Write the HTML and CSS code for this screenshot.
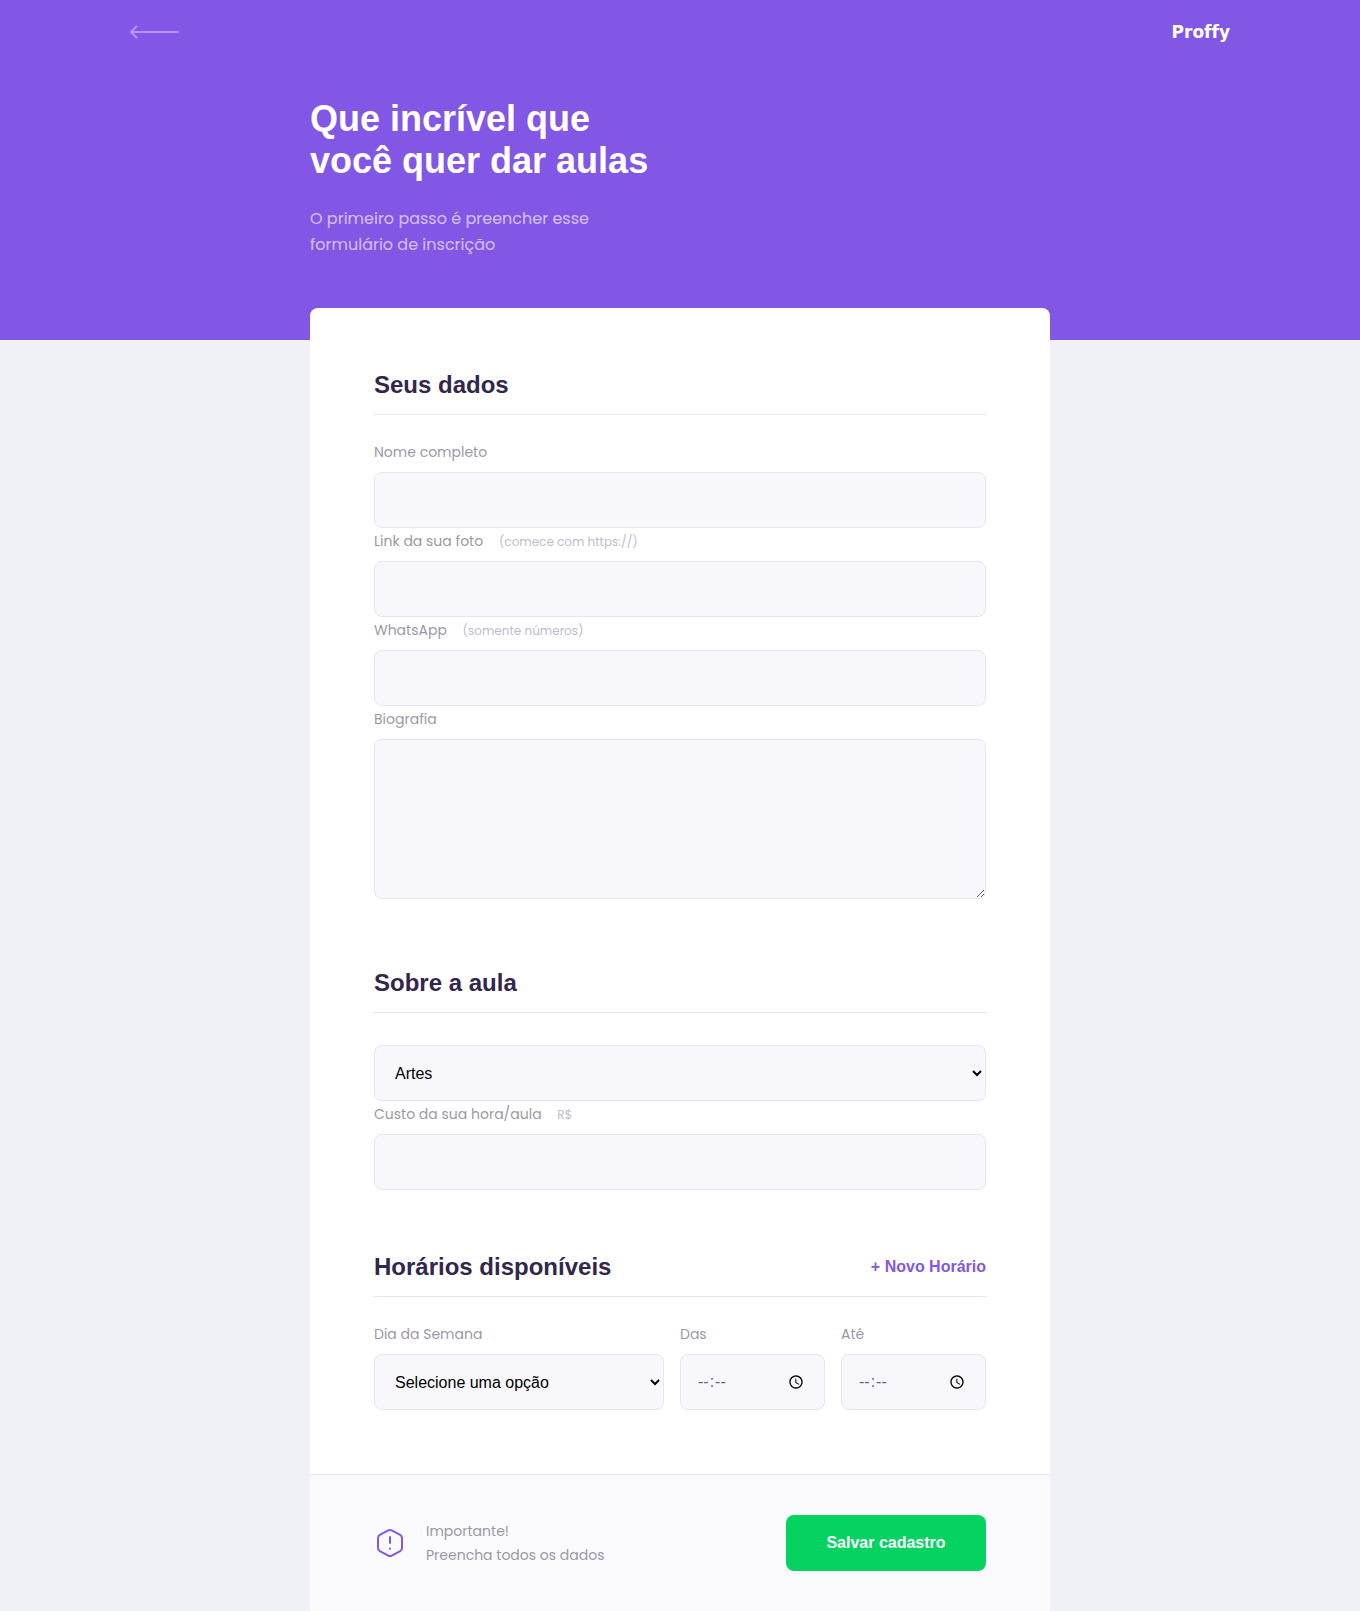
FILE: index.html
```
<!DOCTYPE html>
<html lang="pt-BR">
<head>
  <meta charset="utf-8">
  <meta name="viewport" content="width=device-width, initial-scale=1">
  <title>Proffy | Dar aulas</title>
  <link rel="stylesheet" href="styles.css">
</head>
<body>
  <header class="page-header">
    <nav class="top-bar">
      <a class="back-link" href="#" aria-label="Voltar">
        <svg class="back-icon" width="50" height="14" viewBox="0 0 50 14" fill="none" stroke="currentColor" stroke-width="2" stroke-linecap="round" stroke-linejoin="round">
          <path d="M48 7H1.500M6.500 1.500L1 7l5.500 5.500"/>
        </svg>
      </a>
      <a class="logo" href="#">Proffy</a>
    </nav>
    <div class="header-content">
      <h1 class="page-title">Que incrível que<br>você quer dar aulas</h1>
      <p class="page-intro">O primeiro passo é preencher esse<br>formulário de inscrição</p>
    </div>
  </header>

  <main class="card">
    <form class="class-form" id="create-class">
      <section class="group" aria-labelledby="your-data">
        <div class="group-heading">
          <h2 class="group-title" id="your-data">Seus dados</h2>
        </div>
        <div class="field">
          <label class="label" for="name">Nome completo</label>
          <input class="control" id="name" name="name" type="text">
        </div>
        <div class="field">
          <label class="label" for="avatar">Link da sua foto <small class="hint">(comece com https://)</small></label>
          <input class="control" id="avatar" name="avatar" type="url">
        </div>
        <div class="field">
          <label class="label" for="whatsapp">WhatsApp <small class="hint">(somente números)</small></label>
          <input class="control" id="whatsapp" name="whatsapp" type="tel">
        </div>
        <div class="field">
          <label class="label" for="bio">Biografia</label>
          <textarea class="control control-area" id="bio" name="bio"></textarea>
        </div>
      </section>

      <section class="group" aria-labelledby="about-class">
        <div class="group-heading">
          <h2 class="group-title" id="about-class">Sobre a aula</h2>
        </div>
        <div class="field field-unlabelled">
          <select class="control" id="subject" name="subject" aria-label="Matéria">
            <option>Artes</option>
            <option>Biologia</option>
            <option>Matemática</option>
          </select>
        </div>
        <div class="field">
          <label class="label" for="cost">Custo da sua hora/aula <small class="hint">R$</small></label>
          <input class="control" id="cost" name="cost" type="text">
        </div>
      </section>

      <section class="group" aria-labelledby="schedule">
        <div class="group-heading">
          <h2 class="group-title" id="schedule">Horários disponíveis</h2>
          <button class="add-button" type="button">+ Novo Horário</button>
        </div>
        <div class="schedule-row">
          <div class="field">
            <label class="label" for="weekday">Dia da Semana</label>
            <select class="control" id="weekday" name="weekday">
              <option>Selecione uma opção</option>
              <option>Segunda-feira</option>
              <option>Terça-feira</option>
            </select>
          </div>
          <div class="field">
            <label class="label" for="from">Das</label>
            <input class="control control-time" id="from" name="from" type="time">
          </div>
          <div class="field">
            <label class="label" for="to">Até</label>
            <input class="control control-time" id="to" name="to" type="time">
          </div>
        </div>
      </section>
    </form>

    <footer class="card-footer">
      <p class="notice">
        <svg class="notice-icon" width="32" height="32" viewBox="0 0 32 32" fill="none" stroke="currentColor" stroke-width="2" stroke-linecap="round" stroke-linejoin="round" aria-hidden="true">
          <path d="M14.300 3.400a3.600 3.600 0 0 1 3.400 0l8.500 4.500a3.600 3.600 0 0 1 1.800 3.100v10a3.600 3.600 0 0 1-1.800 3.100l-8.500 4.500a3.600 3.600 0 0 1-3.400 0l-8.500-4.500A3.600 3.600 0 0 1 4 21V11a3.600 3.600 0 0 1 1.800-3.100z"/>
          <path d="M16 10v6M16 21.500v.3"/>
        </svg>
        <span>Importante!<br>Preencha todos os dados</span>
      </p>
      <button class="save-button" type="submit" form="create-class">Salvar cadastro</button>
    </footer>
  </main>
</body>
</html>
```
FILE: styles.css
```
:root {
  --primary: #8257e5;
  --primary-soft: #d4c2ff;
  --background: #f0f0f7;
  --line: #e6e6f0;
  --input: #f8f8fc;
  --title: #32264d;
  --text: #9c98a6;
  --hint: #c1bccc;
  --success: #04d361;
  --font-title: "Liberation Sans", Arial, sans-serif;
  --font-text: Poppins, Inter, sans-serif;
}

* {
  box-sizing: border-box;
  margin: 0;
  padding: 0;
}

body {
  background: var(--background);
  color: var(--text);
  font: 400 14px/24px var(--font-text);
}

.page-header {
  padding: 0 32px 82px;
  background: var(--primary);
}

.top-bar {
  display: flex;
  align-items: center;
  justify-content: space-between;
  max-width: 1100px;
  height: 64px;
  margin: 0 auto;
}

.back-link {
  display: flex;
  color: var(--primary-soft);
}

.back-icon {
  opacity: 0.6;
}

.logo {
  color: #fff;
  font: 700 17px/24px "DejaVu Sans", sans-serif;
  font-variant-ligatures: none;
  text-decoration: none;
}

.header-content {
  max-width: 740px;
  margin: 34px auto 0;
}

.page-title {
  color: #fff;
  font: 700 36px/42px var(--font-title);
}

.page-intro {
  margin-top: 24px;
  color: var(--primary-soft);
  font-size: 16px;
  line-height: 26px;
}

.card {
  width: 100%;
  max-width: 740px;
  margin: -32px auto 0;
  overflow: hidden;
  border-radius: 8px 8px 0 0;
  background: #fff;
}

.class-form {
  display: flex;
  flex-direction: column;
  gap: 64px;
  padding: 64px;
}

.group-heading {
  display: flex;
  align-items: center;
  justify-content: space-between;
  margin-bottom: 24px;
  padding-bottom: 16px;
  border-bottom: 1px solid var(--line);
}

.group-title {
  color: var(--title);
  font: 700 24px/26px var(--font-title);
}

.label {
  display: block;
  margin-bottom: 6px;
  line-height: 27px;
}

.hint {
  margin-left: 12px;
  color: var(--hint);
  font-size: 12px;
  line-height: 16px;
}

.control {
  display: block;
  width: 100%;
  height: 56px;
  padding: 0 20px;
  border: 1px solid var(--line);
  border-radius: 8px;
  background: var(--input);
  font: 400 16px var(--font-title);
}

select.control {
  padding: 0 0 0 16px;
  color: #000;
}

.control-area {
  height: 160px;
  min-height: 56px;
  margin-bottom: 7px;
  padding: 16px 20px;
  resize: vertical;
}

.control-time {
  padding: 0 16px;
  color: #6a6180;
}

.control-time::-webkit-datetime-edit-ampm-field {
  display: none;
}

.field-unlabelled {
  padding-top: 8px;
}

.schedule-row {
  display: grid;
  grid-template-columns: 2fr 1fr 1fr;
  gap: 16px;
}

.add-button {
  border: 0;
  background: none;
  color: var(--primary);
  font: 700 16px/26px var(--font-title);
  cursor: pointer;
}

.card-footer {
  display: flex;
  align-items: center;
  justify-content: space-between;
  gap: 24px;
  padding: 40px 64px;
  border-top: 1px solid var(--line);
  background: #fafafc;
}

.notice {
  display: flex;
  align-items: center;
  gap: 20px;
}

.notice-icon {
  flex: none;
  color: var(--primary);
}

.save-button {
  width: 200px;
  height: 56px;
  border: 0;
  border-radius: 8px;
  background: var(--success);
  color: #fff;
  font: 700 16px var(--font-title);
  cursor: pointer;
}

@media (max-width: 700px) {
  .class-form,
  .card-footer {
    padding-right: 24px;
    padding-left: 24px;
  }

  .schedule-row {
    grid-template-columns: 1fr 1fr;
  }

  .schedule-row .field:first-child {
    grid-column: 1 / -1;
  }

  .card-footer {
    flex-direction: column;
  }
}
```
